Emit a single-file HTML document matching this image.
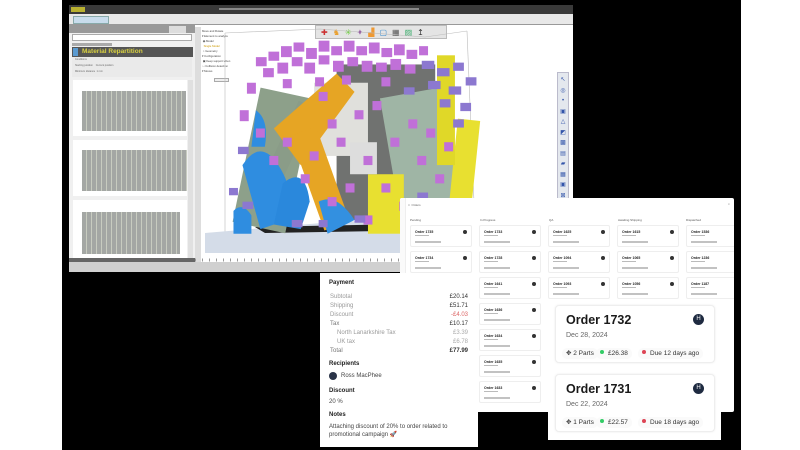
<!DOCTYPE html>
<html><head><meta charset="utf-8"><style>
*{margin:0;padding:0;box-sizing:border-box}
body{width:800px;height:450px;overflow:hidden;background:#fff;position:relative;font-family:"Liberation Sans",sans-serif}
.a{position:absolute}
.bars{background:repeating-linear-gradient(90deg,#a4a7a4 0 4px,#c8ccc0 4px 5px)}
.col{position:absolute;top:0;font-size:3px;color:#555}
.oc{position:absolute;width:62px;height:22px;background:#fff;border:1px solid #eee;border-radius:2px}
.oc b{position:absolute;left:4px;top:4px;font-size:3.5px;color:#222}
.oc i{position:absolute;right:4px;top:4px;width:4px;height:4px;border-radius:50%;background:#333}
.oc s{position:absolute;left:4px;top:9px;width:14px;height:1px;background:#bbb}
.oc u{position:absolute;left:4px;top:15px;width:26px;height:2px;background:#999;opacity:.6}
.pr{position:absolute;left:10px;right:10px;font-size:6px;color:#999}
.pr span{position:absolute;right:0;color:#333}
.big{position:absolute;left:7px;width:160px;height:58px;background:#fff;border:1px solid #eee;border-radius:4px;box-shadow:0 0 2px rgba(0,0,0,.08)}
.big h3{position:absolute;left:10px;top:7px;font-size:12.5px;color:#1a1a1a}
.big .av{position:absolute;right:10px;top:8px;width:11px;height:11px;border-radius:50%;background:#1e2a40;color:#fff;font-size:6px;text-align:center;line-height:11px}
.big .d{position:absolute;left:10px;top:26px;font-size:7px;color:#666}
.big .p{position:absolute;top:42px;height:11px;font-size:6.5px;color:#333;line-height:11px;padding:0 4px;background:#fafafa;border-radius:5px}
.dot{display:inline-block;width:4px;height:4px;border-radius:50%;margin-right:4px;vertical-align:1px}
</style></head><body>
<div class="a" style="left:62px;top:0;width:679px;height:450px;background:#000"></div>

<div class="a" style="left:69px;top:5px;width:504px;height:267px;background:#fff;overflow:hidden">
  <div class="a" style="left:0;top:0;width:504px;height:9px;background:#3a3a3a"></div>
  <div class="a" style="left:2px;top:2px;width:14px;height:5px;background:#b8b030"></div>
  <div class="a" style="left:150px;top:3px;width:200px;height:2px;background:#888"></div>
  <div class="a" style="left:0;top:9px;width:504px;height:11px;background:#e8e8e8;border-bottom:1px solid #999"></div>
  <div class="a" style="left:4px;top:11px;width:36px;height:8px;background:#c8dcec;border:1px solid #8aa"></div>
  <div class="a" style="left:0;top:20px;width:126px;height:8px;background:#999"></div>
  <div class="a" style="left:100px;top:21px;width:17px;height:7px;background:#ddd"></div>
  <div class="a" style="left:0;top:28px;width:126px;height:229px;background:#f0f0f0"></div>
  <div class="a" style="left:3px;top:29px;width:120px;height:7px;background:#fff;border:1px solid #aaa"></div>
  <div class="a" style="left:3px;top:38px;width:40px;height:3px;background:#aaa"></div>
  <div class="a" style="left:3px;top:42px;width:121px;height:10px;background:#555"></div>
  <div class="a" style="left:3px;top:42px;width:121px;height:10px;font-size:6.5px;color:#d8d040;font-weight:bold;padding-left:10px;line-height:10px">Material Repartition</div>
  <div class="a" style="left:4px;top:43px;width:5px;height:8px;background:#5a9ad0"></div>
  <div class="a" style="left:3px;top:52px;width:120px;height:20px;background:#eaeaea;font-size:2.5px;color:#666;line-height:6px;padding-left:3px">Conditions<br>Starting position &nbsp;&nbsp; Current position<br>Minimum distance &nbsp;1 mm</div>
  <div class="a" style="left:4px;top:75px;width:114px;height:56px;background:#fff"></div>
  <div class="a bars" style="left:13px;top:86px;width:104px;height:40px"></div>
  <div class="a" style="left:4px;top:135px;width:114px;height:56px;background:#fff"></div>
  <div class="a bars" style="left:13px;top:145px;width:105px;height:41px"></div>
  <div class="a" style="left:4px;top:195px;width:114px;height:58px;background:#fff"></div>
  <div class="a bars" style="left:13px;top:207px;width:98px;height:42px"></div>
  <div class="a" style="left:119px;top:75px;width:5px;height:180px;background:#e0e0e0"></div>
  <div class="a" style="left:0;top:253px;width:126px;height:4px;background:#666"></div>
  <div class="a" style="left:126px;top:22px;width:6px;height:235px;background:#ddd"></div>
  <div class="a" style="left:133px;top:24px;width:40px;height:60px;font-size:2.8px;color:#444;line-height:5px">Move and Rotate<br>▾ Element to analyze<br>&nbsp;◉ Model<br>&nbsp;&nbsp;<span style="color:#c90">Single Model</span><br>&nbsp;○ Geometry<br>▾ Configuration<br>&nbsp;▣ Keep support when<br>&nbsp;□ Collision detection<br>▾ Moves</div>
  <div class="a" style="left:145px;top:73px;width:15px;height:4px;border:1px solid #aaa;background:#eee"></div>
  <div class="a" style="left:246px;top:20px;width:132px;height:14px;background:#e4e4e4;border:1px solid #bbb"></div>
  <div class="a" style="left:252px;top:23px;font-size:8px;letter-spacing:5px;color:#c33">✚<span style="color:#e9a030">♞</span><span style="color:#6c3">✳</span><span style="color:#849">✦</span><span style="color:#e93">▟</span><span style="color:#38c">▢</span><span style="color:#555">▦</span><span style="color:#3a6">▨</span><span style="color:#333">↥</span></div>
  <svg class="a" style="left:126px;top:22px" width="380" height="240">
    <polyline points="30,6 125,2 230,10 272,4" fill="none" stroke="#bbb" stroke-width=".6"/>
    <line x1="30" y1="6" x2="30" y2="215" stroke="#bbb" stroke-width=".6"/>
    <line x1="272" y1="4" x2="280" y2="200" stroke="#bbb" stroke-width=".6"/>
  </svg>
  <svg class="a" style="left:126px;top:200px" width="300" height="60">
    <polygon points="10,28 150,16 290,20 290,48 10,48" fill="#d4dce8"/>
    <polygon points="60,22 260,18 250,25 70,28" fill="#222"/>
    <line x1="0" y1="55" x2="300" y2="55" stroke="#999" stroke-width="3" stroke-dasharray="1 6"/>
  </svg>
  <svg class="a" style="left:160px;top:32px" width="260" height="215" viewBox="0 0 290 235" preserveAspectRatio="none">
    <rect x="20" y="60" width="60" height="150" fill="#8da08a" transform="rotate(12 50 130)"/>
    <rect x="120" y="30" width="110" height="170" fill="#707270"/>
    <rect x="180" y="60" width="70" height="140" fill="#9fb5a5" transform="rotate(-10 215 130)"/>
    <rect x="95" y="50" width="60" height="80" fill="#e0e0dc"/>
    <rect x="60" y="70" width="20" height="90" fill="#8a9c88" transform="rotate(25 70 110)"/>
    <polygon points="50,100 120,40 140,60 80,140" fill="#e6a524"/>
    <rect x="85" y="100" width="30" height="110" fill="#e6a524" transform="rotate(-20 100 150)"/>
    <rect x="155" y="150" width="40" height="65" fill="#e8e030"/>
    <rect x="250" y="90" width="25" height="110" fill="#e8e030" transform="rotate(6 260 140)"/>
    <rect x="232" y="20" width="20" height="120" fill="#e0d828"/>
    <path d="M15,140 q20,-30 40,0 t10,60 l-30,10z" fill="#2f8de0"/>
    <path d="M60,160 q25,-20 30,20 l-10,30 l-30,-5z" fill="#2a88dc"/>
    <path d="M30,80 q15,10 10,40 l-15,0z" fill="#2f8de0"/>
    <path d="M100,180 q20,-10 40,20 l-30,15z" fill="#3390e0"/>
    <path d="M5,190 q10,-10 20,5 l0,20 l-20,0z" fill="#2f8de0"/>
    <rect x="135" y="115" width="30" height="35" fill="#ddd"/>
    <g fill="#c070d8">
      <rect x="30" y="22" width="12" height="10"/><rect x="44" y="16" width="12" height="10"/><rect x="58" y="10" width="12" height="12"/><rect x="72" y="6" width="12" height="10"/>
      <rect x="86" y="12" width="12" height="12"/><rect x="100" y="4" width="12" height="12"/><rect x="114" y="10" width="12" height="10"/><rect x="128" y="4" width="12" height="12"/>
      <rect x="142" y="10" width="12" height="10"/><rect x="156" y="6" width="12" height="12"/><rect x="170" y="12" width="12" height="10"/><rect x="184" y="8" width="12" height="12"/>
      <rect x="198" y="14" width="12" height="10"/><rect x="212" y="10" width="10" height="10"/>
      <rect x="38" y="34" width="12" height="10"/><rect x="54" y="28" width="12" height="12"/><rect x="70" y="22" width="12" height="10"/><rect x="84" y="28" width="12" height="12"/>
      <rect x="100" y="20" width="12" height="10"/><rect x="116" y="26" width="12" height="12"/><rect x="132" y="22" width="12" height="10"/><rect x="148" y="26" width="12" height="12"/>
      <rect x="164" y="28" width="12" height="10"/><rect x="180" y="24" width="12" height="12"/><rect x="196" y="30" width="12" height="10"/>
      <rect x="60" y="46" width="10" height="10"/><rect x="96" y="44" width="10" height="10"/><rect x="126" y="42" width="10" height="10"/><rect x="170" y="44" width="10" height="10"/>
      <rect x="20" y="50" width="10" height="12"/><rect x="12" y="80" width="10" height="12"/><rect x="30" y="100" width="10" height="10"/>
      <rect x="100" y="60" width="10" height="10"/><rect x="110" y="90" width="10" height="10"/><rect x="140" y="80" width="10" height="10"/>
      <rect x="120" y="110" width="10" height="10"/><rect x="160" y="70" width="10" height="10"/><rect x="200" y="90" width="10" height="10"/>
      <rect x="220" y="100" width="10" height="10"/><rect x="150" y="130" width="10" height="10"/><rect x="210" y="130" width="10" height="10"/>
      <rect x="80" y="150" width="10" height="10"/><rect x="60" y="110" width="10" height="10"/><rect x="170" y="160" width="10" height="10"/>
      <rect x="110" y="175" width="10" height="10"/><rect x="230" y="150" width="10" height="10"/><rect x="180" y="110" width="10" height="10"/>
      <rect x="130" y="160" width="10" height="10"/><rect x="45" y="130" width="10" height="10"/><rect x="190" y="180" width="10" height="10"/>
      <rect x="240" y="115" width="10" height="10"/><rect x="90" y="125" width="10" height="10"/><rect x="150" y="195" width="10" height="10"/>
    </g>
    <g fill="#8c78d0">
      <rect x="215" y="26" width="14" height="9"/><rect x="232" y="34" width="14" height="9"/><rect x="250" y="28" width="12" height="9"/>
      <rect x="222" y="48" width="14" height="9"/><rect x="245" y="54" width="14" height="9"/><rect x="258" y="72" width="12" height="9"/>
      <rect x="235" y="68" width="12" height="9"/><rect x="264" y="44" width="12" height="9"/><rect x="250" y="90" width="12" height="9"/>
      <rect x="10" y="120" width="12" height="8"/><rect x="15" y="180" width="12" height="8"/><rect x="0" y="165" width="10" height="8"/>
      <rect x="140" y="195" width="12" height="8"/><rect x="100" y="200" width="10" height="8"/><rect x="195" y="55" width="12" height="8"/>
      <rect x="210" y="170" width="12" height="8"/><rect x="70" y="200" width="12" height="8"/>
    </g>
  </svg>
  <div class="a" style="left:488px;top:67px;width:12px;height:128px;background:#e4e8ee;border:1px solid #bbc"></div>
  <div class="a" style="left:489px;top:70px;width:10px;font-size:6px;line-height:10.5px;color:#35a;text-align:center">↖<br>◎<br>•<br>▣<br>△<br>◩<br>▩<br>▤<br>▰<br>▦<br>▣<br>⊠</div>
  <div class="a" style="left:0;top:257px;width:504px;height:10px;background:#d0d0d0"></div>
</div>

<div class="a" style="left:400px;top:198px;width:334px;height:214px;background:#fff;border-radius:2px;overflow:hidden">
  <div class="a" style="left:0;top:0;width:6px;height:214px;background:#fafafa;border-right:1px solid #eee"></div>
  <div class="a" style="left:8px;top:5px;font-size:3px;color:#666">□ &nbsp;Orders</div>
  <div class="a" style="left:328px;top:4px;font-size:3px;color:#666">×</div>
  <div class="a" style="left:10px;top:20px;width:320px;height:6px">
    <div class="col" style="left:0">Pending</div><div class="col" style="left:70px">In Progress</div><div class="col" style="left:139px">QA</div><div class="col" style="left:208px">Awaiting Shipping</div><div class="col" style="left:276px">Dispatched</div>
  </div>
  <div class="oc" style="left:10px;top:27px"><b>Order 1735</b><i></i><s></s><u></u></div>
  <div class="oc" style="left:10px;top:53px"><b>Order 1734</b><i></i><s></s><u></u></div>
  <div class="oc" style="left:79px;top:27px"><b>Order 1733</b><i></i><s></s><u></u></div>
  <div class="oc" style="left:79px;top:53px"><b>Order 1728</b><i></i><s></s><u></u></div>
  <div class="oc" style="left:79px;top:79px"><b>Order 1641</b><i></i><s></s><u></u></div>
  <div class="oc" style="left:79px;top:105px"><b>Order 1636</b><i></i><s></s><u></u></div>
  <div class="oc" style="left:79px;top:131px"><b>Order 1634</b><i></i><s></s><u></u></div>
  <div class="oc" style="left:79px;top:157px"><b>Order 1635</b><i></i><s></s><u></u></div>
  <div class="oc" style="left:79px;top:183px"><b>Order 1633</b><i></i><s></s><u></u></div>
  <div class="oc" style="left:148px;top:27px"><b>Order 1625</b><i></i><s></s><u></u></div>
  <div class="oc" style="left:148px;top:53px"><b>Order 1094</b><i></i><s></s><u></u></div>
  <div class="oc" style="left:148px;top:79px"><b>Order 1093</b><i></i><s></s><u></u></div>
  <div class="oc" style="left:217px;top:27px"><b>Order 1615</b><i></i><s></s><u></u></div>
  <div class="oc" style="left:217px;top:53px"><b>Order 1065</b><i></i><s></s><u></u></div>
  <div class="oc" style="left:217px;top:79px"><b>Order 1056</b><i></i><s></s><u></u></div>
  <div class="oc" style="left:286px;top:27px"><b>Order 1536</b><s></s><u></u></div>
  <div class="oc" style="left:286px;top:53px"><b>Order 1236</b><s></s><u></u></div>
  <div class="oc" style="left:286px;top:79px"><b>Order 1187</b><s></s><u></u></div>
</div>

<div class="a" style="left:320px;top:273px;width:158px;height:174px;background:#fff">
  <div class="a" style="left:9px;top:7px;font-size:6px;font-weight:bold;color:#222">Payment</div>
  <div class="pr" style="top:21px">Subtotal<span>£20.14</span></div>
  <div class="pr" style="top:30px">Shipping<span>£51.71</span></div>
  <div class="pr" style="top:39px">Discount<span style="color:#d66">-£4.03</span></div>
  <div class="pr" style="top:48px;color:#777">Tax<span>£10.17</span></div>
  <div class="pr" style="top:57px;padding-left:7px">North Lanarkshire Tax<span style="color:#aaa">£3.39</span></div>
  <div class="pr" style="top:66px;padding-left:7px">UK tax<span style="color:#aaa">£6.78</span></div>
  <div class="pr" style="top:75px;color:#777">Total<span style="font-weight:bold">£77.99</span></div>
  <div class="a" style="left:9px;top:88px;font-size:6px;font-weight:bold;color:#222">Recipients</div>
  <div class="a" style="left:9px;top:99px;width:8px;height:8px;border-radius:50%;background:#2a3448"></div>
  <div class="a" style="left:21px;top:100px;font-size:6px;color:#444">Ross MacPhee</div>
  <div class="a" style="left:9px;top:115px;font-size:6px;font-weight:bold;color:#222">Discount</div>
  <div class="a" style="left:9px;top:126px;font-size:6px;color:#444">20 %</div>
  <div class="a" style="left:9px;top:139px;font-size:6px;font-weight:bold;color:#222">Notes</div>
  <div class="a" style="left:9px;top:150px;font-size:6px;color:#444;line-height:8px;width:145px">Attaching discount of 20% to order related to promotional campaign 🚀</div>
</div>

<div class="a" style="left:548px;top:300px;width:173px;height:140px;background:#fff">
  <div class="big" style="top:5px"><h3>Order 1732</h3><div class="av">H</div><div class="d">Dec 28, 2024</div>
    <div class="p" style="left:6px">✥ 2 Parts</div><div class="p" style="left:40px"><span class="dot" style="background:#3c6"></span>£26.38</div><div class="p" style="left:82px"><span class="dot" style="background:#d45"></span>Due 12 days ago</div></div>
  <div class="big" style="top:74px"><h3>Order 1731</h3><div class="av">H</div><div class="d">Dec 22, 2024</div>
    <div class="p" style="left:6px">✥ 1 Parts</div><div class="p" style="left:40px"><span class="dot" style="background:#3c6"></span>£22.57</div><div class="p" style="left:82px"><span class="dot" style="background:#d45"></span>Due 18 days ago</div></div>
</div>
</body></html>
